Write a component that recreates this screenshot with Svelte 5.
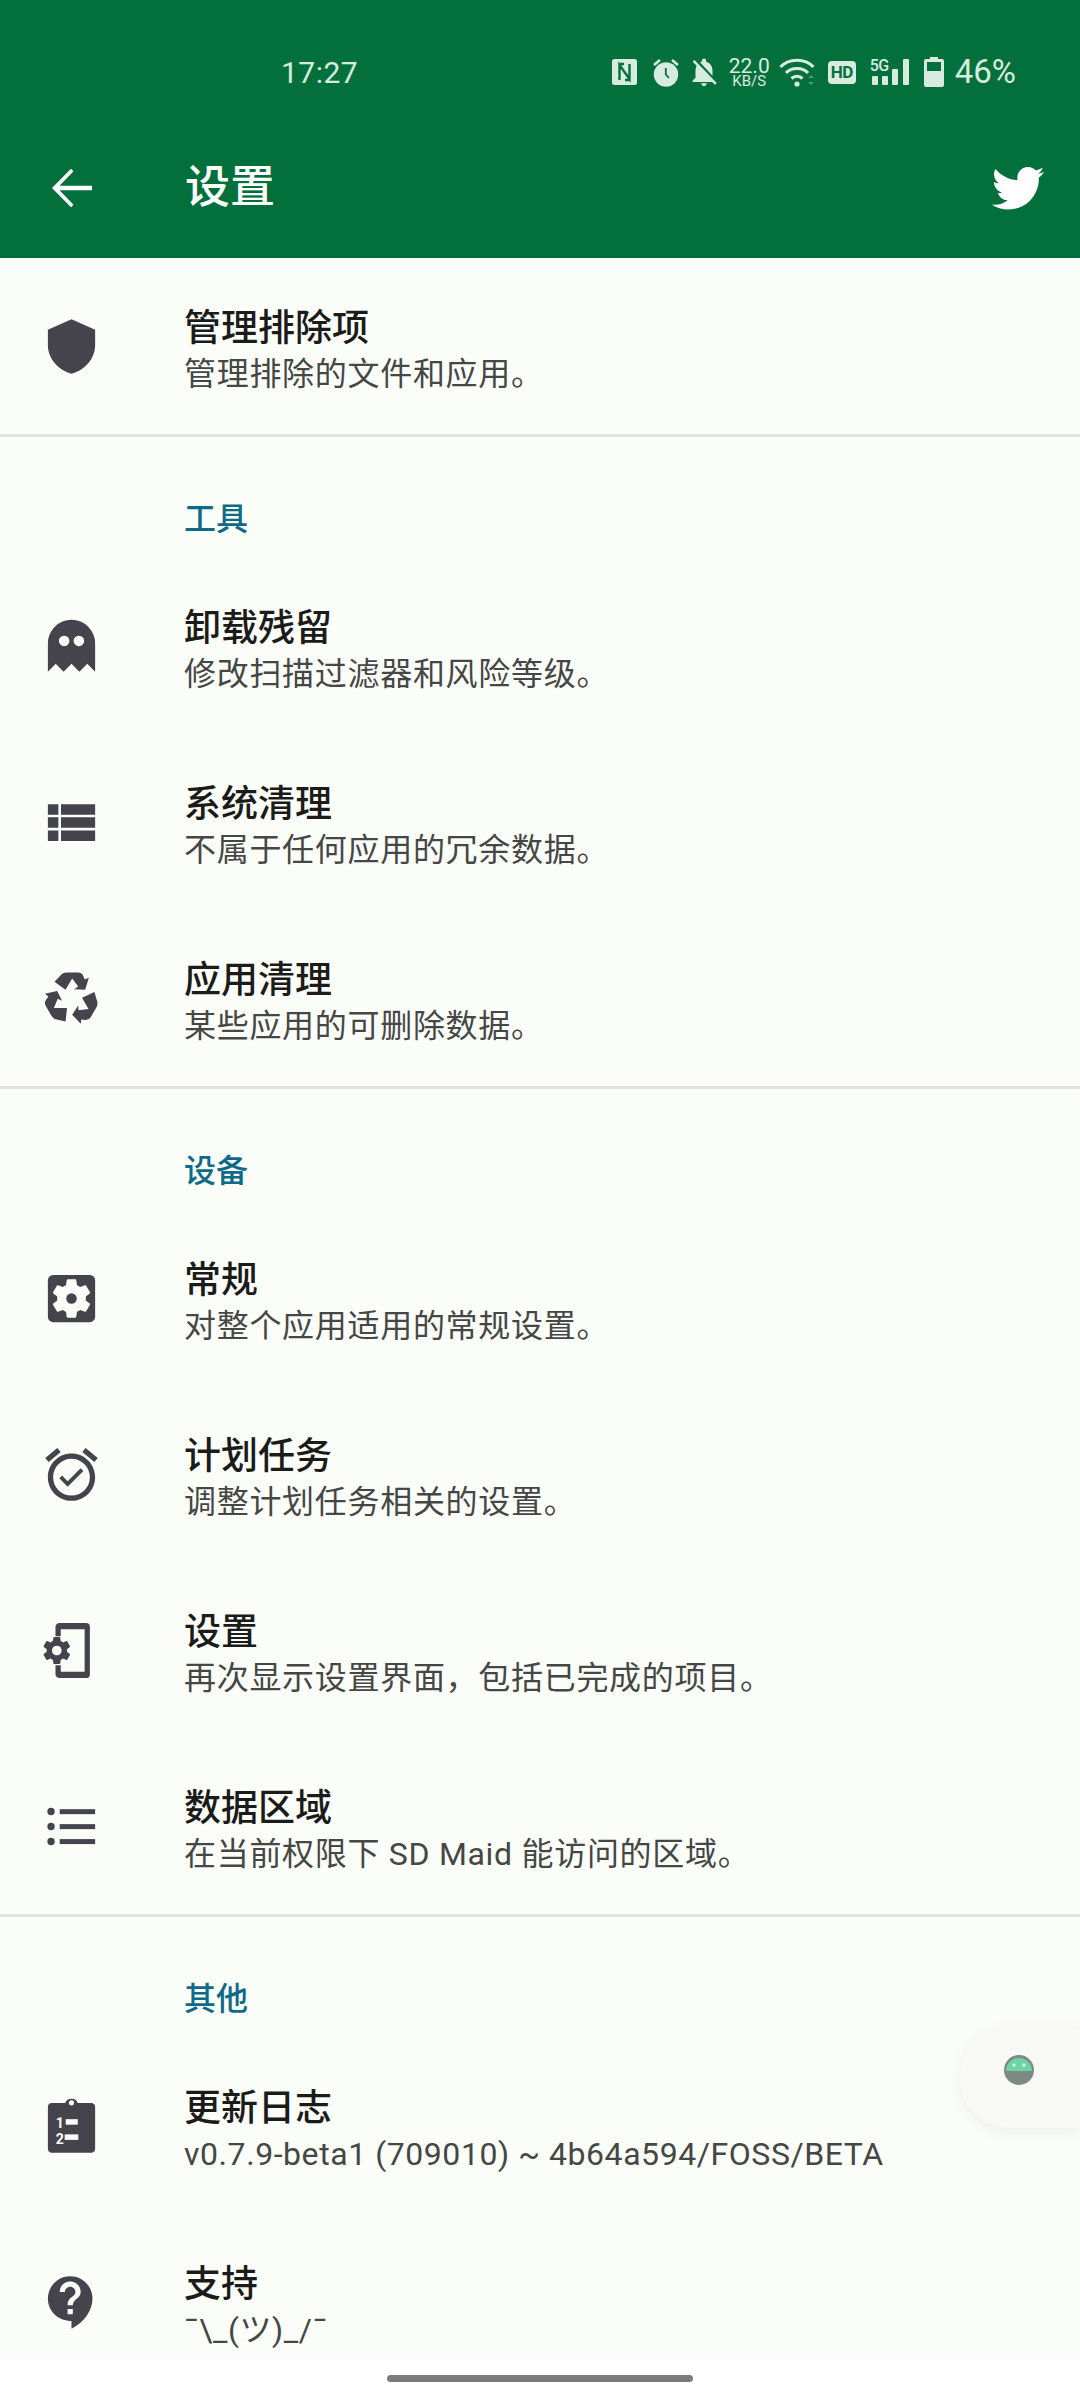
<script>
  const sections = [
    {
      rows: [{ icon: 'shield', title: '管理排除项', sub: '管理排除的文件和应用。' }]
    },
    {
      label: '工具',
      rows: [
        { icon: 'ghost', title: '卸载残留', sub: '修改扫描过滤器和风险等级。' },
        { icon: 'table', title: '系统清理', sub: '不属于任何应用的冗余数据。' },
        { icon: 'recycle', title: '应用清理', sub: '某些应用的可删除数据。' }
      ]
    },
    {
      label: '设备',
      rows: [
        { icon: 'cogbox', title: '常规', sub: '对整个应用适用的常规设置。' },
        { icon: 'alarm', title: '计划任务', sub: '调整计划任务相关的设置。' },
        { icon: 'phone', title: '设置', sub: '再次显示设置界面，包括已完成的项目。' },
        { icon: 'list', title: '数据区域', sub: '在当前权限下 SD Maid 能访问的区域。' }
      ]
    },
    {
      label: '其他',
      rows: [
        { icon: 'clipboard', title: '更新日志', sub: 'v0.7.9-beta1 (709010) ~ 4b64a594/FOSS/BETA', latin: true },
        { icon: 'help', title: '支持', sub: '¯\\_(ツ)_/¯', latin: true }
      ]
    }
  ];

  const COG = 'M19.14,12.94c0.04-0.3,0.06-0.61,0.06-0.94c0-0.32-0.02-0.64-0.07-0.94l2.03-1.58c0.18-0.14,0.23-0.41,0.12-0.61l-1.92-3.32c-0.12-0.22-0.37-0.29-0.59-0.22l-2.39,0.96c-0.5-0.38-1.03-0.7-1.62-0.94L14.4,2.81c-0.04-0.24-0.24-0.41-0.48-0.41h-3.84c-0.24,0-0.43,0.17-0.47,0.41L9.25,5.35C8.66,5.59,8.12,5.92,7.63,6.29L5.24,5.33c-0.22-0.08-0.47,0-0.59,0.22L2.74,8.87C2.62,9.08,2.66,9.34,2.86,9.48l2.03,1.58C4.84,11.36,4.8,11.69,4.8,12s0.02,0.64,0.07,0.94l-2.03,1.58c-0.18,0.14-0.23,0.41-0.12,0.61l1.92,3.32c0.12,0.22,0.37,0.29,0.59,0.22l2.39-0.96c0.5,0.38,1.03,0.7,1.62,0.94l0.36,2.54c0.05,0.24,0.24,0.41,0.48,0.41h3.84c0.24,0,0.44-0.17,0.47-0.41l0.36-2.54c0.59-0.24,1.13-0.56,1.62-0.94l2.39,0.96c0.22,0.08,0.47,0,0.59-0.22l1.92-3.32c0.12-0.22,0.07-0.47-0.12-0.61L19.14,12.94z';
  // one arm of the recycle sign, rotated twice around its centre
  const ARROW = 'M165 672 L188 648 Q194 644 204 644 H236 Q246 644 251 654 L256 665 L268 660 L257 696 L224 694 L236 686 L218 662 L198 696 Z';
</script>

{#snippet rowIcon(id)}
  <svg class="row-icon" viewBox="0 0 24 24" fill="currentColor">
    {#if id === 'shield'}
      <path d="M12 1.6 L21 5.6 V11.5 C21 16.6 17 21 12 22.4 C7 21 3 16.6 3 11.5 V5.6 Z" />
    {:else if id === 'ghost'}
      <path fill-rule="evenodd" d="M3 21.6 V10.8 A9 9 0 0 1 21 10.8 V21.6 L18 18.6 L15 21.6 L12 18.6 L9 21.6 L6 18.6 Z M9.2 7.9 a2 2 0 1 0 0.01 0 Z M14.8 7.9 a2 2 0 1 0 0.01 0 Z" />
    {:else if id === 'table'}
      <path d="M3 14h4v-4H3v4zm0 5h4v-4H3v4zM3 9h4V5H3v4zm5 5h13v-4H8v4zm0 5h13v-4H8v4zM8 5v4h13V5H8z" />
    {:else if id === 'recycle'}
      <g transform="translate(12 12) scale(.127) translate(-216 -722)">
        <path d={ARROW} />
        <path d={ARROW} transform="rotate(120 216 722)" />
        <path d={ARROW} transform="rotate(240 216 722)" />
      </g>
    {:else if id === 'cogbox'}
      <rect x="3" y="3" width="18" height="18" rx="2" />
      <path class="cut" d={COG} transform="translate(12 12) scale(.76) translate(-12 -12)" />
      <circle cx="12" cy="12" r="2" />
    {:else if id === 'alarm'}
      <path d="M22 5.72l-4.6-3.86-1.29 1.53 4.6 3.86L22 5.72zM7.88 3.39L6.6 1.86 2 5.71l1.29 1.53 4.59-3.85zM12 4c-4.97 0-9 4.03-9 9s4.03 9 9 9 9-4.03 9-9-4.03-9-9-9zm0 16c-3.86 0-7-3.14-7-7s3.14-7 7-7 7 3.14 7 7-3.14 7-7 7zm-1.46-5.47L8.41 12.4l-1.06 1.06 3.18 3.18 6-6-1.06-1.06-4.93 4.95z" />
    {:else if id === 'phone'}
      <path d="M7.5 1.5 H17.5 A1.5 1.5 0 0 1 19 3 V21 A1.5 1.5 0 0 1 17.5 22.5 H7.5 A1.5 1.5 0 0 1 5.9 21 V17.6 H7.9 V20.1 H17 V3.9 H7.9 V6.6 H5.9 V3 A1.5 1.5 0 0 1 7.5 1.5 Z" />
      <path fill-rule="evenodd" d="{COG} M12 8.6 a3.4 3.4 0 1 0 0.01 0 Z" transform="translate(6.4 12) scale(.54) translate(-12 -12)" />
    {:else if id === 'list'}
      <circle cx="4.2" cy="6.3" r="1.4" />
      <circle cx="4.2" cy="12" r="1.4" />
      <circle cx="4.2" cy="17.7" r="1.4" />
      <rect x="7.5" y="5.4" width="13.5" height="1.9" />
      <rect x="7.5" y="11.1" width="13.5" height="1.9" />
      <rect x="7.5" y="16.8" width="13.5" height="1.9" />
    {:else if id === 'clipboard'}
      <path fill-rule="evenodd" d="M4.3 3 H9.6 A2.6 2.6 0 0 1 14.4 3 H19.7 A1.6 1.6 0 0 1 21 4.6 V20.4 A1.6 1.6 0 0 1 19.7 22 H4.3 A1.6 1.6 0 0 1 3 20.4 V4.6 A1.6 1.6 0 0 1 4.3 3 Z M12 2 a1 1 0 1 0 0.01 0 Z" />
      <text class="cut" x="6" y="12.6" font-size="5.4">1</text>
      <text class="cut" x="6" y="18.6" font-size="5.4">2</text>
      <rect class="cut" x="9.8" y="9.2" width="4.6" height="2.1" />
      <rect class="cut" x="9.4" y="15" width="5.2" height="2.1" />
    {:else if id === 'help'}
      <path d="M11.5 2C6.81 2 3 5.81 3 10.5S6.81 19 11.5 19h.5v3c4.86-2.34 8-7 8-11.5C20 5.81 16.19 2 11.5 2zm1 14.5h-2v-2h2v2zm0-3.5h-2c0-3.25 3-3 3-5 0-1.1-.9-2-2-2s-2 .9-2 2h-2c0-2.21 1.79-4 4-4s4 1.79 4 4c0 2.5-3 2.75-3 5z" />
    {/if}
  </svg>
{/snippet}

<div class="page">
  <header class="appbar">
    <div class="statusbar">
      <span class="clock">17:27</span>
      <div class="status-icons">
        <svg class="s-nfc" viewBox="0 0 25 26">
          <rect width="25" height="26" rx="2.5" fill="#d8ebe0" />
          <path d="M7.5 21 V6 L17.5 20 V5 M12 5 H7.5 M13 21 H17.5" fill="none" stroke="#03703c" stroke-width="2.4" />
        </svg>
        <svg class="s-alarm" viewBox="0 0 26 29">
          <circle cx="13" cy="16.5" r="12.2" fill="#d8ebe0" />
          <path d="M1 7 L7 2 M25 7 L19 2" stroke="#d8ebe0" stroke-width="2.6" />
          <path d="M12.8 10 V16.5 L16 20" fill="none" stroke="#03703c" stroke-width="1.8" />
        </svg>
        <svg class="s-bell" viewBox="0 0 24 24" fill="#d8ebe0">
          <path d="M20 18.69L7.84 6.14 5.27 3.49 4 4.76l2.8 2.8v.01c-.52.99-.8 2.16-.8 3.42v5l-2 2v1h13.73l2 2L21 19.72l-1-1.03zM12 22c1.11 0 2-.89 2-2h-4c0 1.11.89 2 2 2zm6-7.32V11c0-3.08-1.64-5.64-4.5-6.32V4c0-.83-.67-1.5-1.5-1.5s-1.5.67-1.5 1.5v.68c-.15.03-.29.08-.42.12-.1.03-.2.07-.3.11h-.01c-.2.08-.4.17-.59.27-.01 0-.01 0-.02.01L18 14.68z" />
        </svg>
        <div class="speed"><span>22.0</span><small>KB/S</small></div>
        <svg class="s-wifi" viewBox="0 0 36 30" fill="none" stroke="#d8ebe0" stroke-width="3.2">
          <path d="M1.5 10 C10 1 26 1 34.5 10" />
          <path d="M7 16 C12.5 10 23.5 10 29 16" />
          <path d="M12.5 21.5 C15.5 18.5 20.5 18.5 23.5 21.5" />
          <circle cx="18" cy="27" r="2.6" fill="#d8ebe0" stroke="none" />
          <path d="M29 21 L32 18 L35 21 Z M29 25 L32 28 L35 25 Z" fill="#4b9a72" stroke="none" />
        </svg>
        <div class="hd">HD</div>
        <div class="signal">
          <span class="five-g">5G</span>
          <svg viewBox="0 0 39 26" fill="#d8ebe0">
            <rect x="2" y="17" width="6" height="9" rx="1" />
            <rect x="12" y="17" width="6" height="9" rx="1" />
            <rect x="22" y="10" width="6" height="16" rx="1" />
            <rect x="33" y="0" width="6" height="26" rx="1" />
          </svg>
        </div>
        <svg class="s-batt" viewBox="0 0 20 30">
          <path fill="#d8ebe0" d="M6 0 H14 V2 H18 A2 2 0 0 1 20 4 V28 A2 2 0 0 1 18 30 H2 A2 2 0 0 1 0 28 V4 A2 2 0 0 1 2 2 H6 Z" />
          <rect x="3" y="5" width="14" height="9" fill="#03703c" />
        </svg>
        <span class="pct">46%</span>
      </div>
    </div>
    <div class="toolbar">
      <svg class="back" viewBox="0 0 24 24" fill="#fff">
        <path d="M20 11.1H7l5.6-5.8-1-1L4 12l7.6 7.7 1-1L7 12.9H20z" />
      </svg>
      <h1>设置</h1>
      <svg class="bird" viewBox="0 0 24 24" fill="#fff">
        <path d="M22.46 6c-.77.35-1.6.58-2.46.69.88-.53 1.56-1.37 1.88-2.38-.83.5-1.75.85-2.72 1.05C18.37 4.5 17.26 4 16 4c-2.35 0-4.27 1.92-4.27 4.29 0 .34.04.67.11.98C8.28 9.09 5.11 7.38 3 4.79c-.37.63-.58 1.37-.58 2.15 0 1.49.75 2.81 1.91 3.56-.71 0-1.37-.2-1.95-.5v.03c0 2.08 1.48 3.82 3.44 4.21a4.22 4.22 0 0 1-1.93.07 4.28 4.28 0 0 0 4 2.98 8.521 8.521 0 0 1-5.33 1.84c-.34 0-.68-.02-1.02-.06C3.44 20.29 5.7 21 8.12 21 16 21 20.33 14.46 20.33 8.79c0-.19 0-.37-.01-.56.84-.6 1.56-1.36 2.14-2.23z" />
      </svg>
    </div>
  </header>

  <main>
    {#each sections as section}
      <section class="group">
        {#if section.label}
          <h2>{section.label}</h2>
        {/if}
        {#each section.rows as row}
          <div class="row">
            {@render rowIcon(row.icon)}
            <div class="row-text">
              <div class="title">{row.title}</div>
              <div class="sub" class:latin={row.latin}>{row.sub}</div>
            </div>
          </div>
        {/each}
      </section>
    {/each}
  </main>

  <aside class="edge-tab">
    <svg viewBox="0 0 30 30">
      <circle cx="15" cy="15" r="15" fill="#7d8a84" />
      <path d="M2 16 A13 13 0 0 1 28 16 Z" fill="#6fd3a3" />
      <circle cx="10" cy="10" r="1.6" fill="#e8f7ef" />
      <circle cx="20" cy="10" r="1.6" fill="#e8f7ef" />
    </svg>
  </aside>

  <div class="navbar"><span class="pill"></span></div>
</div>

<style>
  :global(body) {
    margin: 0;
    background: #fbfdf9;
  }

  .page {
    position: relative;
    width: 1080px;
    height: 2400px;
    overflow: hidden;
    background: #fbfdf9;
    font-family: Roboto, "Noto Sans CJK SC", sans-serif;
  }

  .appbar {
    height: 258px;
    background: #03703c;
    color: #fff;
  }

  .statusbar {
    display: flex;
    align-items: center;
    height: 72px;
    padding: 36px 64px 0 281px;
    color: #d8ebe0;
  }

  .clock {
    font-size: 30px;
    letter-spacing: 0.5px;
  }

  .status-icons {
    display: flex;
    align-items: center;
    margin-left: auto;
  }

  .s-nfc { width: 25px; height: 26px; margin-right: 16px; }
  .s-alarm { width: 26px; height: 29px; margin-right: 8px; }
  .s-bell { width: 34px; height: 34px; margin-right: 8px; }
  .s-wifi { width: 36px; height: 30px; margin: 0 13px 0 9px; }
  .s-batt { width: 20px; height: 30px; margin-right: 11px; }

  .speed {
    display: flex;
    flex-direction: column;
    align-items: center;
    width: 41px;
    font-size: 21px;
    line-height: 17px;
  }

  .speed small {
    font-size: 15px;
    line-height: 12px;
  }

  .hd {
    width: 28px;
    height: 23px;
    border-radius: 4px;
    background: #d8ebe0;
    color: #03703c;
    font-size: 17px;
    font-weight: 700;
    line-height: 23px;
    text-align: center;
    letter-spacing: -0.5px;
  }

  .signal {
    position: relative;
    width: 39px;
    height: 26px;
    margin: 0 15px 0 14px;
  }

  .signal svg {
    display: block;
    width: 39px;
    height: 26px;
  }

  .five-g {
    position: absolute;
    left: 0;
    top: 0;
    font-size: 16px;
    font-weight: 500;
    line-height: 14px;
    letter-spacing: -0.5px;
  }

  .pct {
    font-size: 33px;
    line-height: 36px;
  }

  .toolbar {
    display: flex;
    align-items: center;
    height: 150px;
    padding-top: 10px;
    box-sizing: border-box;
  }

  .back {
    width: 60px;
    height: 60px;
    margin-left: 42px;
  }

  h1 {
    margin: 0 0 0 83px;
    font-size: 45px;
    font-weight: 500;
    line-height: 60px;
  }

  .bird {
    width: 60px;
    height: 60px;
    margin: -3px 32px 0 auto;
  }

  .group + .group {
    border-top: 3px solid #e1e3df;
  }

  h2 {
    display: flex;
    align-items: center;
    height: 121px;
    margin: 0;
    padding: 37px 0 0 184px;
    box-sizing: border-box;
    color: #0e6a86;
    font-size: 32px;
    font-weight: 500;
  }

  .row {
    display: flex;
    align-items: center;
    height: 176px;
    color: #45434b;
  }

  .row-icon {
    flex: none;
    width: 63px;
    height: 63px;
    margin-left: 40px;
  }

  .cut {
    fill: #fbfdf9;
    font-family: Roboto, sans-serif;
    font-weight: 700;
  }

  .row-text {
    margin-left: 81px;
    padding-top: 11px;
  }

  .title {
    color: #1b1c1a;
    font-size: 37px;
    font-weight: 500;
    line-height: 44px;
  }

  .sub {
    color: #454744;
    font-size: 32px;
    line-height: 46px;
    letter-spacing: 0.7px;
  }

  .sub.latin {
    letter-spacing: 0.56px;
  }

  .edge-tab {
    position: absolute;
    top: 2025px;
    left: 960px;
    display: flex;
    align-items: center;
    width: 120px;
    height: 103px;
    padding-left: 44px;
    box-sizing: border-box;
    border-radius: 48px 0 0 48px;
    background: #f8f8f7;
    box-shadow: 0 4px 14px rgba(0, 0, 0, 0.06);
  }

  .edge-tab svg {
    width: 30px;
    height: 30px;
    margin-top: -14px;
  }

  .navbar {
    position: absolute;
    left: 0;
    right: 0;
    bottom: 0;
    display: flex;
    justify-content: center;
    height: 42px;
    background: #ffffff;
  }

  .pill {
    width: 306px;
    height: 7px;
    margin-top: 17px;
    border-radius: 4px;
    background: #7c7c7c;
  }
</style>
